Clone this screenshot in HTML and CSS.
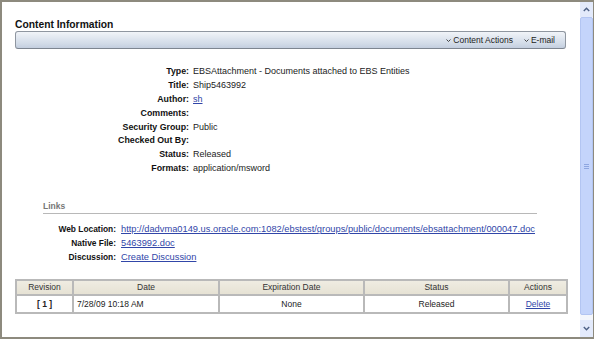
FILE: index.html
```html
<!DOCTYPE html>
<html>
<head>
<meta charset="utf-8">
<link rel="stylesheet" href="styles.css">
</head>
<body>
<div class="window">
  <div class="content">
    <h1 class="title">Content Information</h1>
    <div class="toolbar">
      <span class="menu"><svg class="chev" width="5" height="3" viewBox="0 0 5 3"><path d="M0.5 0.5 L2.5 2.5 L4.5 0.5" fill="none" stroke="#333" stroke-width="0.9"/></svg>Content Actions</span>
      <span class="menu"><svg class="chev" width="5" height="3" viewBox="0 0 5 3"><path d="M0.5 0.5 L2.5 2.5 L4.5 0.5" fill="none" stroke="#333" stroke-width="0.9"/></svg>E-mail</span>
    </div>
    <div class="props">
      <div class="lbl">Type:</div><div class="val">EBSAttachment - Documents attached to EBS Entities</div>
      <div class="lbl">Title:</div><div class="val">Ship5463992</div>
      <div class="lbl">Author:</div><div class="val"><a class="link" href="#">sh</a></div>
      <div class="lbl">Comments:</div><div class="val">&nbsp;</div>
      <div class="lbl">Security Group:</div><div class="val">Public</div>
      <div class="lbl">Checked Out By:</div><div class="val">&nbsp;</div>
      <div class="lbl">Status:</div><div class="val">Released</div>
      <div class="lbl">Formats:</div><div class="val">application/msword</div>
    </div>
    <div class="links">
      <div class="links-head">Links</div>
      <div class="links-grid">
        <div class="llbl">Web Location:</div><div class="lval"><a class="link" href="#">http://dadvma0149.us.oracle.com:1082/ebstest/groups/public/documents/ebsattachment/000047.doc</a></div>
        <div class="llbl">Native File:</div><div class="lval"><a class="link" href="#">5463992.doc</a></div>
        <div class="llbl">Discussion:</div><div class="lval"><a class="link" href="#">Create Discussion</a></div>
      </div>
    </div>
    <table class="revs">
      <colgroup>
        <col class="c-rev"><col class="c-date"><col class="c-exp"><col class="c-status"><col class="c-act">
      </colgroup>
      <thead>
        <tr><th>Revision</th><th>Date</th><th>Expiration Date</th><th>Status</th><th>Actions</th></tr>
      </thead>
      <tbody>
        <tr><td class="center rev">[ 1 ]</td><td class="left">7/28/09 10:18 AM</td><td class="center">None</td><td class="center">Released</td><td class="center"><a class="link" href="#">Delete</a></td></tr>
      </tbody>
    </table>
  </div>
  <div class="scrollbar">
    <div class="sb-btn sb-up"><svg width="7" height="5" viewBox="0 0 7 5"><path d="M0.8 4 L3.5 1.2 L6.2 4" fill="none" stroke="#4d6185" stroke-width="1.4"/></svg></div>
    <div class="sb-thumb"><div class="grip"></div></div>
    <div class="sb-btn sb-down"><svg width="7" height="5" viewBox="0 0 7 5"><path d="M0.8 1 L3.5 3.8 L6.2 1" fill="none" stroke="#4d6185" stroke-width="1.4"/></svg></div>
  </div>
</div>
</body>
</html>
```

FILE: styles.css
```css
html, body {
  margin: 0;
  padding: 0;
  background: #ffffff;
  overflow: hidden;
}
body {
  font-family: "Liberation Sans", Arial, sans-serif;
  color: #222;
}
.window {
  box-sizing: border-box;
  width: 594px;
  height: 339px;
  border-top: 2px solid #8d8a7e;
  border-left: 2px solid #8d8a7e;
  border-bottom: 2px solid #8d8a7e;
  border-right: 1px solid #8d8a7e;
  display: flex;
  background: #fff;
}
.content {
  flex: 1;
  padding: 0 14px 0 13px;
  overflow: hidden;
}
.title {
  margin: 17px 0 0 0;
  font-size: 10.3px;
  line-height: 12px;
  font-weight: bold;
  color: #111;
}
.toolbar {
  box-sizing: border-box;
  height: 18px;
  border: 1px solid #8f96a0;
  border-bottom-color: #7d8590;
  border-radius: 3px;
  background: linear-gradient(#f1f4f8 0%, #dde4ee 45%, #d3dce8 70%, #c3cedf 100%);
  display: flex;
  justify-content: flex-end;
  align-items: center;
  gap: 11px;
  padding: 0 10px 0 0;
  font-size: 8.5px;
  line-height: 16px;
  color: #222;
}
.menu {
  display: flex;
  align-items: center;
  gap: 2px;
}
.chev {
  display: block;
}
.props {
  margin-top: 16px;
  display: grid;
  grid-template-columns: 174px 1fr;
  grid-auto-rows: 13.9px;
  column-gap: 4px;
  font-size: 9px;
  line-height: 13.9px;
  align-items: start;
}
.lbl {
  text-align: right;
  font-weight: bold;
  font-size: 8.8px;
  color: #111;
  white-space: nowrap;
}
.val {
  color: #222;
  white-space: nowrap;
}
.link {
  color: #3146a8;
  text-decoration: underline;
}
.links {
  margin: 24.5px 29px 0 28px;
}
.links-head {
  font-size: 8.5px;
  line-height: 10px;
  font-weight: bold;
  color: #777;
  padding-bottom: 2px;
  border-bottom: 1px solid #b8b8b8;
}
.links-grid {
  margin-top: 8.8px;
  display: grid;
  grid-template-columns: 73px 1fr;
  grid-auto-rows: 14px;
  column-gap: 5px;
  line-height: 14px;
  align-items: start;
}
.llbl {
  text-align: right;
  font-weight: bold;
  font-size: 8.4px;
  color: #111;
  white-space: nowrap;
}
.lval {
  font-size: 9.3px;
  white-space: nowrap;
}
.revs {
  margin-top: 15px;
  width: 551px;
  table-layout: fixed;
  border-collapse: collapse;
  font-size: 8.5px;
  color: #222;
}
.c-rev { width: 57px; }
.c-date { width: 146px; }
.c-exp { width: 145px; }
.c-status { width: 145px; }
.c-act { width: 58px; }
.revs th, .revs td {
  border: 2px solid #b9b9b9;
  padding: 0 3px;
}
.revs th {
  height: 12.7px;
  line-height: 12.7px;
  font-weight: normal;
  background: linear-gradient(#efece2, #e6e2d4);
  color: #333;
}
.revs td {
  height: 16px;
  line-height: 16px;
}
.center { text-align: center; }
.left { text-align: left; }
.rev { font-weight: bold; }
.scrollbar {
  width: 13px;
  display: flex;
  flex-direction: column;
  background: #f4f6fc;
}
.sb-btn {
  display: flex;
  align-items: center;
  justify-content: center;
  background: #e3eafb;
}
.sb-up {
  height: 15px;
}
.sb-down {
  height: 17px;
  margin-top: 5px;
}
.sb-thumb {
  flex: 1;
  box-sizing: border-box;
  background: #c4d4fb;
  border: 1px solid #b3c5f2;
  border-radius: 2px;
  display: flex;
  align-items: center;
  justify-content: center;
}
.grip {
  width: 5px;
  height: 5px;
  background: repeating-linear-gradient(#8ea6e0 0 1px, transparent 1px 2px);
}
```
